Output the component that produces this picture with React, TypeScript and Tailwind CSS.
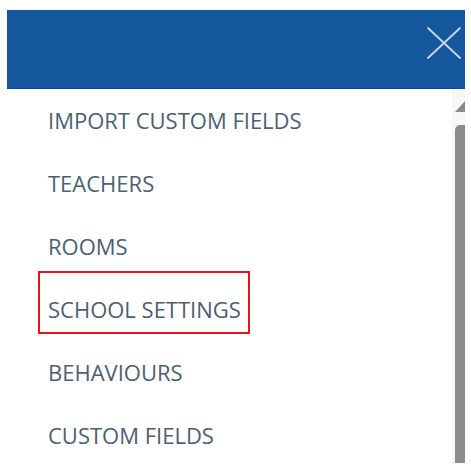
import React from "react";

const ITEMS = [
  "IMPORT CUSTOM FIELDS",
  "TEACHERS",
  "ROOMS",
  "SCHOOL SETTINGS",
  "BEHAVIOURS",
  "CUSTOM FIELDS",
];

const SELECTED = "SCHOOL SETTINGS";

function CloseIcon() {
  return (
    <svg width="34" height="32" viewBox="0 0 34 32" fill="none">
      <path
        d="M1 1 L33 31 M33 1 L1 31"
        stroke="#c9d9ee"
        strokeWidth="1.8"
        strokeLinecap="round"
      />
    </svg>
  );
}

function Scrollbar() {
  return (
    <div className="flex w-[13px] flex-col items-end bg-[#f7f7f7]">
      <div className="mt-[12px] h-0 w-0 border-b-[11px] border-l-[10px] border-b-[#8a8a8a] border-l-transparent" />
      <div className="mt-[13px] h-[338px] w-[10px] rounded-tl-[5px] bg-[#8c8c8c]" />
    </div>
  );
}

export default function App() {
  return (
    <div
      className="h-[469px] w-[471px] bg-white pl-[7px] pt-[10px]"
      style={{ fontFamily: '"Open Sans", "Noto Sans", sans-serif' }}
    >
      <div className="flex w-[458px] flex-col">
        <div className="flex h-[79px] items-start justify-end border-b border-[#0b4b97] bg-[#15589e] pr-[4px] pt-[17px]">
          <CloseIcon />
        </div>
        <div className="flex h-[374px]">
          <ul className="flex-1">
            {ITEMS.map((label) => (
              <li key={label} className="h-[63px]">
                <a
                  className={`ml-[31px] -mt-[7px] inline-block border-2 pb-[8px] pl-[8px] pr-[7px] pt-[21px] text-[22px] leading-[30px] text-[#4b6170] ${
                    label === SELECTED ? "border-[#e3161b]" : "border-transparent"
                  }`}
                >
                  {label}
                </a>
              </li>
            ))}
          </ul>
          <Scrollbar />
        </div>
      </div>
    </div>
  );
}
